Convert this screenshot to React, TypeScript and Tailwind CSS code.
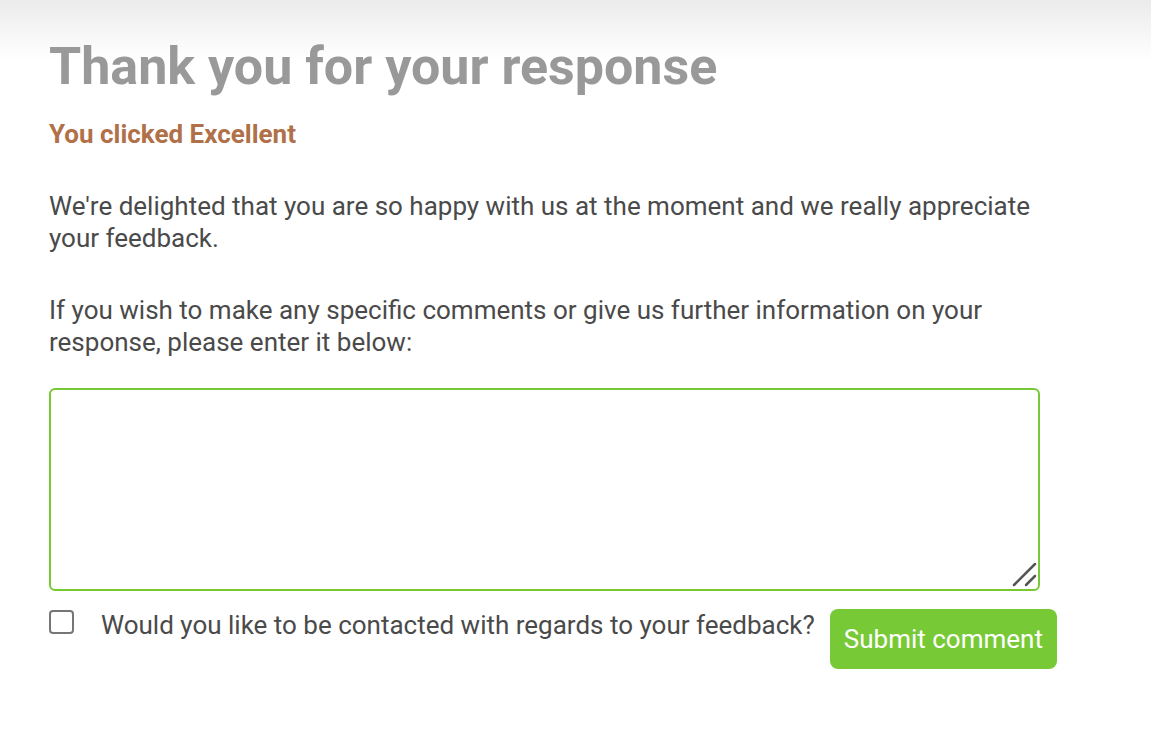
import React from "react";

export default function App() {
  return (
    <div
      className="min-h-[743px] w-full bg-[linear-gradient(to_bottom,#ebebeb_0px,#ffffff_60px)]"
      style={{ fontFamily: "Roboto, 'Noto Sans', sans-serif" }}
    >
      <div className="pl-[49px] pt-[36px] w-[1040px]">
        <h1 className="text-[52px] leading-[62px] font-bold text-[#999999]">
          Thank you for your response
        </h1>
        <h2 className="mt-[20px] text-[26px] leading-[32px] font-bold text-[#b07048]">
          You clicked Excellent
        </h2>
        <p className="mt-[40px] text-[26px] leading-[32px] text-[#4a4a4a]">
          We're delighted that you are so happy with us at the moment and we really appreciate
          your feedback.
        </p>
        <p className="mt-[40px] text-[26px] leading-[32px] text-[#4a4a4a]">
          If you wish to make any specific comments or give us further information on your
          response, please enter it below:
        </p>
        <div className="relative mt-[30px] w-[991px] h-[203px]">
          <textarea className="block w-full h-full border-2 border-[#76c934] rounded-[6px] outline-none resize-none" />
          <svg
            className="absolute right-[3px] bottom-[3px] pointer-events-none"
            width="26"
            height="26"
            viewBox="0 0 26 26"
          >
            <line x1="3" y1="23" x2="24" y2="2" stroke="#555" strokeWidth="2.5" strokeLinecap="round" />
            <line x1="15" y1="23" x2="24" y2="14" stroke="#555" strokeWidth="2.5" strokeLinecap="round" />
          </svg>
        </div>
        <div className="mt-[21px] flex items-start w-max whitespace-nowrap">
          <input
            type="checkbox"
            className="mt-[-2px] appearance-none w-[25px] h-[24px] border-2 border-[#767676] rounded-[4px] bg-white shrink-0"
          />
          <span className="ml-[27px] mt-[-3px] text-[26px] leading-[32px] text-[#4a4a4a]">
            Would you like to be contacted with regards to your feedback?
          </span>
          <button className="ml-[15px] mt-[-3px] h-[60px] px-[14px] rounded-[8px] bg-[#77ca35] text-white text-[26px] leading-[32px]">
            Submit comment
          </button>
        </div>
      </div>
    </div>
  );
}
